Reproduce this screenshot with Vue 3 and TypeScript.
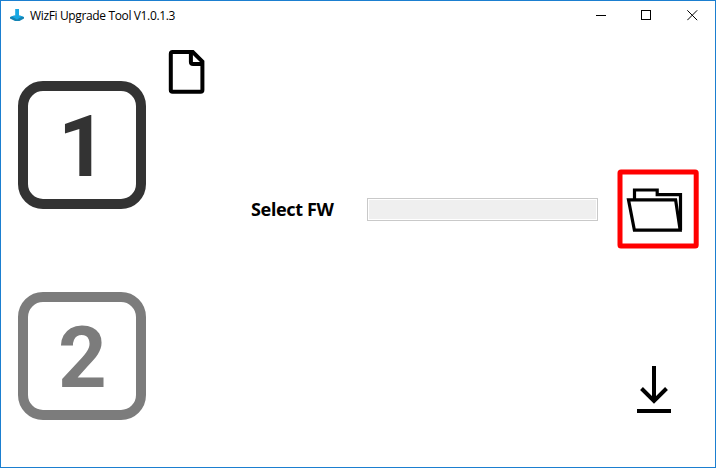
<script setup lang="ts">
import { ref } from 'vue'

interface Step {
  id: number
  active: boolean
}

const title = 'WizFi Upgrade Tool V1.0.1.3'
const steps: Step[] = [
  { id: 1, active: true },
  { id: 2, active: false },
]
const firmwarePath = ref('')
</script>

<template>
  <div class="window">
    <header class="titlebar">
      <svg class="app-icon" width="16" height="16" viewBox="0 0 16 16">
        <path d="M1 10 L5 8.5 H11 L15 10 V11.5 L10.5 14 H6 L1 11.5Z" fill="#1484b4" />
        <path d="M6.2 2 H10 V9 H14 L8 12.5 L2 9 H6.2Z" fill="#18a8e4" />
      </svg>
      <span class="title">{{ title }}</span>
      <div class="controls">
        <button class="control" aria-label="Minimize">
          <svg width="11" height="11" viewBox="0 0 11 11" shape-rendering="crispEdges"><path d="M1 5.5H11" /></svg>
        </button>
        <button class="control" aria-label="Maximize">
          <svg width="11" height="11" viewBox="0 0 11 11" shape-rendering="crispEdges"><path d="M.5 .5H9.5V9.5H.5Z" /></svg>
        </button>
        <button class="control" aria-label="Close">
          <svg width="11" height="11" viewBox="0 0 11 11"><path d="M.3 .3L10.2 10.2M10.2 .3L.3 10.2" /></svg>
        </button>
      </div>
    </header>

    <main class="content">
      <div class="steps">
        <div v-for="step in steps" :key="step.id" class="step" :class="{ active: step.active }">
          <span class="digit">{{ step.id }}</span>
        </div>
      </div>

      <div class="panel">
        <svg class="file-icon" width="37" height="44" viewBox="0 0 37 44">
          <path d="M4.6 2H24.8L34.4 11.5V40Q34.4 41.8 32.6 41.8H4.6Q2.8 41.8 2.8 40V4Q2.8 2 4.6 2Z" />
          <path d="M22.9 2.5V11.9Q22.9 13.9 25.1 13.9H34" />
        </svg>
        <div class="firmware">
          <label class="label" for="firmware">Select FW</label>
          <input id="firmware" v-model="firmwarePath" class="path" type="text" readonly />
          <button class="browse" aria-label="Browse">
            <svg width="82" height="80" viewBox="617 169 82 80">
              <rect x="620" y="172" width="76.2" height="74" rx="1" fill="none" stroke="#f00" stroke-width="5" />
              <path class="folder" d="M634.5 199V190H657.2V194.6H680.5V230.2" />
              <path class="folder" d="M628.5 199.8H675.6L680.2 230.2H634.4Z" />
            </svg>
          </button>
        </div>
        <button class="download" aria-label="Download">
          <svg width="34" height="47" viewBox="0 0 34 47">
            <path d="M17 0V35M4.5 22.5L17 35L29.5 22.5M0 45H34" fill="none" stroke="#000" stroke-width="4" />
          </svg>
        </button>
      </div>
    </main>
  </div>
</template>

<style>
body {
  margin: 0;
  background: #fff;
}
</style>

<style scoped>
.window {
  box-sizing: border-box;
  width: 716px;
  height: 468px;
  display: flex;
  flex-direction: column;
  border: 1px solid #1b7fd0;
  background: #fff;
  color: #000;
  font-family: "Noto Sans", "Open Sans", sans-serif;
  overflow: hidden;
}
button {
  padding: 0;
  border: 0;
  background: none;
}
svg {
  display: block;
}
.titlebar {
  display: flex;
  align-items: center;
  height: 30px;
  padding-left: 8px;
}
.app-icon {
  margin-top: -2px;
}
.title {
  margin-left: 5px;
  font-family: "Open Sans", sans-serif;
  font-size: 12px;
  line-height: 16px;
  letter-spacing: -0.36px;
  white-space: nowrap;
}
.controls {
  display: flex;
  align-self: flex-start;
  margin-left: auto;
}
.control {
  display: flex;
  align-items: center;
  justify-content: center;
  width: 46px;
  height: 29px;
}
.control path {
  fill: none;
  stroke: #000;
  stroke-width: 1;
}
.content {
  flex: 1;
  display: flex;
  padding-left: 17px;
}
.steps {
  display: flex;
  flex-direction: column;
  gap: 83px;
  padding-top: 50px;
}
.step {
  box-sizing: border-box;
  width: 128px;
  height: 128px;
  display: flex;
  align-items: center;
  justify-content: center;
  border: 10px solid #7c7c7c;
  border-radius: 25px;
  color: #7c7c7c;
}
.step.active {
  border-color: #333;
  color: #333;
}
.digit {
  padding: 4px 0 0 1px;
  font: 700 85px/104px Roboto, sans-serif;
}
.panel {
  flex: 1;
  display: flex;
  flex-direction: column;
  padding: 19px 16px 0 22px;
}
.file-icon path {
  fill: none;
  stroke: #000;
  stroke-width: 4;
}
.firmware {
  display: flex;
  align-items: center;
  margin-top: 75px;
  padding-left: 83px;
}
.label {
  width: 116px;
  font-size: 18px;
  font-weight: 700;
  line-height: 24px;
  letter-spacing: -0.36px;
  white-space: nowrap;
}
.path {
  box-sizing: border-box;
  width: 231px;
  height: 23px;
  padding: 0;
  border: 1px solid #c9c9c9;
  background: #efefef;
  box-shadow: inset 0 0 0 1px #fff;
}
.browse {
  margin-left: auto;
}
.folder {
  fill: none;
  stroke: #000;
  stroke-width: 3.2;
}
.download {
  align-self: flex-end;
  margin: 117px 28px 0 0;
}
</style>
